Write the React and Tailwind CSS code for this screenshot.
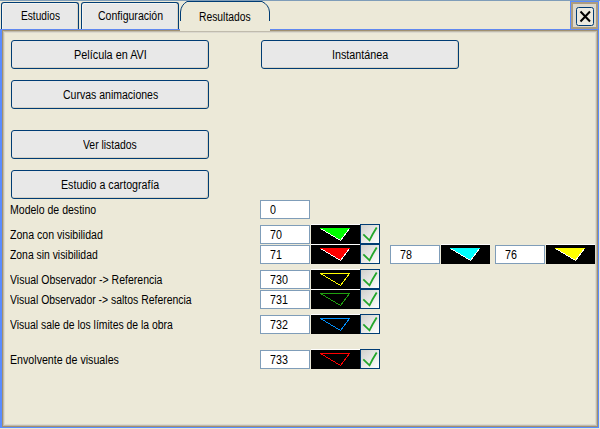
import { useLayoutEffect, useRef, useState } from "react";

// Condensed UI text: squeezes a line horizontally to the given width.
function Txt({ w, children }) {
  const ref = useRef(null);
  const [s, setS] = useState(0.88);
  useLayoutEffect(() => {
    setS(w / ref.current.offsetWidth);
  }, [w]);
  return (
    <span className="flex h-[14px] justify-start overflow-visible" style={{ width: w }}>
      <span ref={ref} className="block h-[14px] w-max shrink-0 origin-left leading-[14px] whitespace-nowrap" style={{ transform: `scaleX(${s})` }}>
        {children}
      </span>
    </span>
  );
}

function Button({ w, className = "", children }) {
  return (
    <button className={`flex h-[29px] w-[198px] items-center justify-center rounded-[3px] border border-[#003c74] bg-[#e8e8e8] shadow-[inset_-1px_-1px_0_#d6d2c6] ${className}`}>
      <Txt w={w}>{children}</Txt>
    </button>
  );
}

function Tab({ w, className, children }) {
  return (
    <div className={`flex h-[27px] items-center justify-center rounded-t-[3px] border border-b-0 border-[#003c74] bg-[#e8e8e8] shadow-[inset_-1px_0_0_#d6d2c6,inset_1px_1px_0_#f4f4f2] ${className}`}>
      <Txt w={w}>{children}</Txt>
    </div>
  );
}

function Field({ value, w }) {
  return (
    <div className="flex h-[19px] w-[50px] items-center border border-[#7f9db9] bg-white pl-[9px]">
      <Txt w={w}>{value}</Txt>
    </div>
  );
}

function Swatch({ fill = "none", stroke = "#fff" }) {
  return (
    <svg className="ml-px h-[19px] w-[49px] bg-black shadow-[0_-1px_0_#fff]" viewBox="0 0 49 19" shapeRendering="crispEdges">
      <path d="M9.5 3.5H38.5L29.5 15.5Z" fill={fill} stroke={stroke} />
      {fill !== "none" && <path d="M9 3.5H39" stroke={fill} />}
    </svg>
  );
}

function Check() {
  return (
    <div className="h-5 w-5 shrink-0 border border-[#003c74] bg-linear-to-br from-[#d0d0cc] to-white">
      <svg className="h-[18px] w-[18px]" viewBox="0 0 18 18" fill="none" stroke="#22a52a" strokeWidth="1.8">
        <path d="M2.3 9.3L8.5 15.3L11.5 9.5L15.7 2.5" />
      </svg>
    </div>
  );
}

function Row({ label, w, value, vw, className = "", fill, stroke, children }) {
  return (
    <div className={`flex h-5 items-start ${className}`}>
      <div className="flex h-[19px] w-[250px] items-center"><Txt w={w}>{label}</Txt></div>
      <Field value={value} w={vw} />
      {stroke && (
        <>
          <Swatch fill={fill} stroke={stroke} />
          <div className="-mt-px flex"><Check /></div>
        </>
      )}
      {children}
    </div>
  );
}

export default function App() {
  return (
    <div className="flex h-[429px] w-[600px] flex-col overflow-hidden border-t border-[#7f9db9] bg-[#ece9d8] font-['Liberation_Sans',Arial,sans-serif] text-[12.5px] text-black">
      <div className="flex h-[28px] shrink-0">
        <Tab w={39} className="mt-px ml-px w-[78px]">Estudios</Tab>
        <Tab w={65} className="mt-px ml-[2px] w-[98px]">Configuración</Tab>
        <div className="relative ml-px flex h-[29px] w-[90px] justify-center pt-[9px]">
          <svg className="absolute top-0 left-0 h-5 w-[90px]" viewBox="0 0 90 20" fill="none" stroke="#003c74">
            <path d="M0.5 20V11Q1 4 7 0.5H82Q89 4 89.5 11V20" />
          </svg>
          <Txt w={52}>Resultados</Txt>
        </div>
        <div className="mr-px ml-auto flex h-[28px] w-[29px] border-x border-t border-[#5a8cff]">
          <div className="flex h-[27px] w-full justify-center border-2 border-[#ac9d80] bg-[#dcd8cc] pt-[3px]">
            <svg className="h-[19px] w-[18px]" viewBox="0 0 18 19" fill="none">
              <rect x="0.5" y="0.5" width="17" height="18" rx="2" fill="#eceadf" stroke="#003c74" />
              <path d="M4.5 4.5L14 14.5M14 4.5L4.5 14.5" stroke="#000" strokeWidth="2" />
            </svg>
          </div>
        </div>
      </div>
      <div className="flex h-px shrink-0">
        <div className="w-[180px] bg-[#6088f0]" />
        <div className="w-[90px]" />
        <div className="w-[329px] bg-[#6088f0]" />
      </div>
      <div className="flex h-[398px] w-[599px] shrink-0 flex-col border-r border-b border-l-2 border-[#5a8cff]">
        <div className="flex h-px shrink-0">
          <div className="w-[178px] bg-[#a09070]" />
          <div className="w-[90px]" />
          <div className="grow bg-[#a09070]" />
        </div>
        <div className="flex h-[396px] flex-col border-x border-b border-[#a09070] shadow-[inset_0_0_0_1px_#c0bbad,inset_0_0_0_2px_#dcd9cf]">
          <div className="flex flex-col pt-[9px] pl-[7px]">
            <div className="flex gap-[52px] pl-px">
              <Button w={73}>Película en AVI</Button>
              <Button w={56}>Instantánea</Button>
            </div>
            <Button w={95} className="mt-[11px] ml-px">Curvas animaciones</Button>
            <Button w={54} className="mt-[21px] ml-px">Ver listados</Button>
            <Button w={98} className="mt-[11px] ml-px">Estudio a cartografía</Button>
            <Row className="mt-px" label="Modelo de destino" w={86} value="0" vw={6} />
            <Row className="mt-[5px]" label="Zona con visibilidad" w={93} value="70" vw={12} fill="#00ff00" stroke="#fff" />
            <Row label="Zona sin visibilidad" w={88} value="71" vw={12} fill="#ff0000" stroke="#fff">
              <div className="ml-[10px] flex"><Field value="78" w={12} /><Swatch fill="#00ffff" /></div>
              <div className="ml-[5px] flex"><Field value="76" w={12} /><Swatch fill="#ffff00" /></div>
            </Row>
            <Row className="mt-[5px]" label="Visual Observador -> Referencia" w={152} value="730" vw={18} stroke="#ffff00" />
            <Row label="Visual Observador -> saltos Referencia" w={182} value="731" vw={18} stroke="#20a010" />
            <Row className="mt-[5px]" label="Visual sale de los límites de la obra" w={163} value="732" vw={18} stroke="#0090ff" />
            <Row className="mt-[15px]" label="Envolvente de visuales" w={109} value="733" vw={18} stroke="#ff0000" />
          </div>
        </div>
      </div>
    </div>
  );
}
